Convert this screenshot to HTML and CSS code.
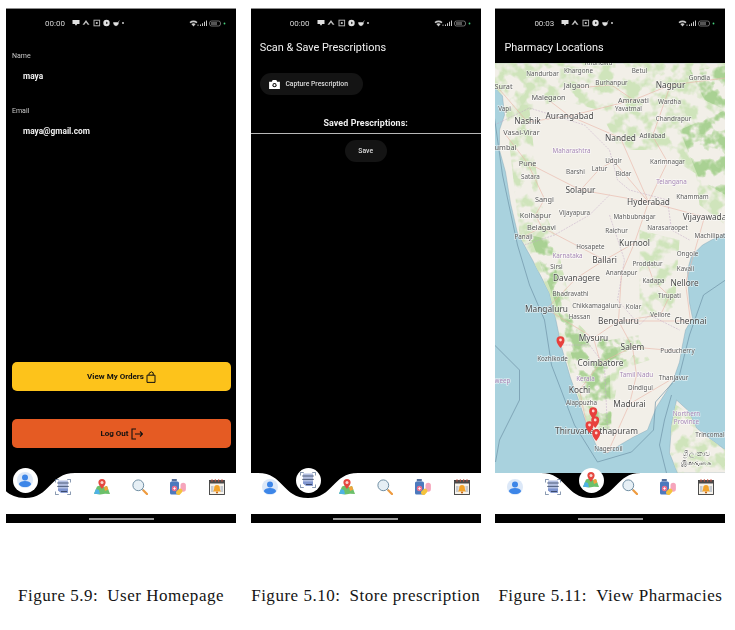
FILE: index.html
```html
<!DOCTYPE html>
<html lang="en">
<head>
<meta charset="utf-8">
<title>Figures 5.9 to 5.11</title>
<link rel="stylesheet" href="styles.css">
</head>
<body>
<svg class="defs" aria-hidden="true">
  <symbol id="i-profile" viewBox="0 0 16 16">
    <circle cx="8" cy="8" r="8" fill="#dce8f8"/>
    <circle cx="8" cy="5.600" r="3" fill="#3d86e8"/>
    <path d="M1.800 12.200C2.400 9.800 5 9 8 9s5.600.8 6.200 3.200C13 14.400 10.600 15 8 15s-5-.6-6.200-2.800z" fill="#3d86e8"/>
  </symbol>
  <symbol id="i-scan" viewBox="0 0 16 16">
    <path d="M.4 3.500V.4h3.400M12.200.4h3.400v3.100M15.600 12.500v3.100h-3.400M3.800 15.600H.4v-3.100" fill="none" stroke="#5d7394" stroke-width=".8"/>
    <path d="M3 1.600h10v12.200H6l-3-2.400z" fill="#b4c0e2"/>
    <path d="M3 9.500h10v4.300H6l-3-2.400z" fill="#7f95cf"/>
    <path d="M2.200 4h11.600M2.200 7.400h11.600" stroke="#42506e" stroke-width=".9"/>
    <path d="M6 12.500h6" stroke="#33415f" stroke-width=".9"/>
  </symbol>
  <symbol id="i-map" viewBox="0 0 16 16">
    <path d="M3 7.500 6 6.600l4 1.400 3-1 3 8-5-.3-4.600.7L0 14.700z" fill="#6cc06a"/>
    <path d="M0 14.700 2 10l3 1 1 4.200z" fill="#4fb2e6"/>
    <path d="M10 8l3-1 1.300 3.500L11 12z" fill="#f1a33c"/>
    <path d="M8 0a3.600 3.600 0 0 1 3.600 3.600C11.600 6 8 10 8 10S4.400 6 4.400 3.600A3.600 3.600 0 0 1 8 0z" fill="#e5473f"/>
    <circle cx="8" cy="3.600" r="1.500" fill="#f8d6d0"/>
  </symbol>
  <symbol id="i-search" viewBox="0 0 16 16">
    <circle cx="6.300" cy="6.300" r="5.400" fill="#e6eff5" stroke="#6f8ea3" stroke-width="1"/>
    <path d="M10.500 10.500l1 1" stroke="#6f8ea3" stroke-width="1.400"/>
    <path d="M11.500 11.500l3.500 3.500" stroke="#ee9a3d" stroke-width="2.200" stroke-linecap="round"/>
  </symbol>
  <symbol id="i-meds" viewBox="0 0 16 16">
    <rect x="1.800" y="0" width="5" height="2.400" fill="#546f9c"/>
    <rect x="0" y="2.400" width="9" height="13" rx="1.500" fill="#4c79bd"/>
    <circle cx="4.500" cy="9.500" r="2.700" fill="#ee6f8c"/>
    <path d="M3.200 9.500h2.600M4.500 8.200v2.600" stroke="#fff" stroke-width=".8"/>
    <rect x="10.500" y="3.800" width="5.400" height="9" rx="2.700" fill="#f6a5bb"/>
    <path d="M7.500 15.800a2.300 2.300 0 0 1-1-3.600l2.400-2.200a2.300 2.300 0 0 1 3.300 3l-2.200 2.400a2.300 2.300 0 0 1-2.500.4z" fill="#f4c33d"/>
  </symbol>
  <symbol id="i-cal" viewBox="0 0 16 16">
    <rect x=".5" y="1.500" width="15" height="14" fill="#f7f3ec" stroke="#3b3b3b" stroke-width=".9"/>
    <rect x=".5" y="1.500" width="15" height="3" fill="#4a4a4a"/>
    <path d="M3 .2v2.500M6.300.2v2.500M9.700.2v2.500M13 .2v2.500" stroke="#c8503f" stroke-width="1"/>
    <path d="M2 13V7h2.500v6zM11.500 13V7H14v6z" fill="#c5cad0"/>
    <path d="M8 6a2.800 2.800 0 0 1 2.800 2.800c0 2 .6 2.800 1.200 3.600H4c.6-.8 1.200-1.600 1.200-3.600A2.800 2.800 0 0 1 8 6z" fill="#f2a32a"/>
    <circle cx="8" cy="13.500" r="1.100" fill="#c96a18"/>
  </symbol>
  <symbol id="i-status-left" viewBox="0 0 52 8">
    <path d="M.5 1h7v4H5.200L4 6.800 2.800 5H.5z" fill="#e0e0e0"/>
    <path d="M14 1l1.200 1.700 2.300 3h-1.800L14 3.500 12.300 5.700h-1.800l2.300-3z" fill="#c0c0c0"/>
    <rect x="22" y="1.200" width="5.600" height="5.600" fill="none" stroke="#b0b0b0"/>
    <circle cx="24.800" cy="4" r="1.100" fill="#ccc"/>
    <circle cx="34.500" cy="4" r="3.200" fill="#e0e0e0"/>
    <path d="M34 2.400l2.200 1.600-2.200 1.300z" fill="#333"/>
    <path d="M41.500 3.500h5c0 2-1.100 3.200-2.500 3.200s-2.500-1.200-2.500-3.200zM46 2.800l1.700-1.100" fill="#e0e0e0" stroke="#e0e0e0" stroke-width=".5"/>
    <circle cx="51" cy="4" r=".9" fill="#e0e0e0"/>
  </symbol>
  <symbol id="i-status-right" viewBox="0 0 38 7">
    <path d="M.5 2a7 7 0 0 1 8 0L7.500 3.300a5 5 0 0 0-6 0zM2.300 4a4 4 0 0 1 4.400 0L4.500 6.500z" fill="#c8c8c8"/>
    <path d="M8.500 4.500h1v1.500h-1z" fill="#aaa"/>
    <path d="M11 4.500h1V6h-1zM13 3.200h1V6h-1zM15 1.800h1V6h-1zM17 .6h1V6h-1z" fill="#c8c8c8"/>
    <rect x="20.500" y="1" width="11" height="5" rx="2" fill="none" stroke="#888" stroke-width=".8"/>
    <rect x="22" y="2" width="6" height="3" fill="#555"/>
    <circle cx="35.500" cy="3.500" r=".9" fill="#45d07c"/>
  </symbol>
</svg>

<main class="page">
  <figure class="figure">
    <section class="phone">
      <header class="status">
        <span class="time">00:00</span>
        <svg class="status-left"><use href="#i-status-left"/></svg>
        <svg class="status-right"><use href="#i-status-right"/></svg>
      </header>
      <div class="screen profile-screen">
        <p class="field-label">Name</p>
        <p class="field-value">maya</p>
        <p class="field-label email-label">Email</p>
        <p class="field-value">maya@gmail.com</p>
        <button class="wide-btn btn-orders">View My Orders
          <svg class="btn-icon" viewBox="0 0 10 12"><path d="M1 4.200h8v7.200H1zM3 4.200V2.400L5.400.8 7.200 1.800v2.400" fill="none" stroke="#111" stroke-width="1"/></svg>
        </button>
        <button class="wide-btn btn-logout">Log Out
          <svg class="btn-icon-logout" viewBox="0 0 12 12"><path d="M5 1H1v10h4M4 6h7.500M9 3.500 11.500 6 9 8.500" fill="none" stroke="#111" stroke-width="1.100"/></svg>
        </button>
      </div>
      <nav class="nav">
        <svg class="notch notch-1" viewBox="0 0 100 25"><path d="M0 0C26 0 24 25 50 25S74 0 100 0z"/></svg>
        <span class="nav-item active"><svg class="nav-icon"><use href="#i-profile"/></svg></span>
        <span class="nav-item"><svg class="nav-icon"><use href="#i-scan"/></svg></span>
        <span class="nav-item"><svg class="nav-icon"><use href="#i-map"/></svg></span>
        <span class="nav-item"><svg class="nav-icon"><use href="#i-search"/></svg></span>
        <span class="nav-item"><svg class="nav-icon"><use href="#i-meds"/></svg></span>
        <span class="nav-item"><svg class="nav-icon"><use href="#i-cal"/></svg></span>
      </nav>
      <div class="homebar"><span class="home-pill"></span></div>
    </section>
    <figcaption class="caption">Figure 5.9:&ensp;User Homepage</figcaption>
  </figure>

  <figure class="figure">
    <section class="phone">
      <header class="status">
        <span class="time">00:00</span>
        <svg class="status-left"><use href="#i-status-left"/></svg>
        <svg class="status-right"><use href="#i-status-right"/></svg>
      </header>
      <div class="screen scan-screen">
        <h1 class="title">Scan &amp; Save Prescriptions</h1>
        <button class="pill capture">
          <svg class="camera" viewBox="0 0 12 10"><path d="M0 2h3l1-2h4l1 2h3v8H0z" fill="#fff"/><circle cx="6" cy="5.700" r="2.300" fill="#141414"/><circle cx="6" cy="5.700" r="1.200" fill="#fff"/></svg>
          Capture Prescription
        </button>
        <h2 class="saved">Saved Prescriptions:</h2>
        <div class="saved-list">
          <button class="pill save">Save</button>
        </div>
      </div>
      <nav class="nav">
        <svg class="notch notch-2" viewBox="0 0 100 25"><path d="M0 0C26 0 24 25 50 25S74 0 100 0z"/></svg>
        <span class="nav-item"><svg class="nav-icon"><use href="#i-profile"/></svg></span>
        <span class="nav-item active"><svg class="nav-icon"><use href="#i-scan"/></svg></span>
        <span class="nav-item"><svg class="nav-icon"><use href="#i-map"/></svg></span>
        <span class="nav-item"><svg class="nav-icon"><use href="#i-search"/></svg></span>
        <span class="nav-item"><svg class="nav-icon"><use href="#i-meds"/></svg></span>
        <span class="nav-item"><svg class="nav-icon"><use href="#i-cal"/></svg></span>
      </nav>
      <div class="homebar"><span class="home-pill"></span></div>
    </section>
    <figcaption class="caption">Figure 5.10:&ensp;Store prescription</figcaption>
  </figure>

  <figure class="figure">
    <section class="phone">
      <header class="status">
        <span class="time">00:03</span>
        <svg class="status-left"><use href="#i-status-left"/></svg>
        <svg class="status-right"><use href="#i-status-right"/></svg>
      </header>
      <div class="screen map-screen">
        <h1 class="title">Pharmacy Locations</h1>
        <svg class="map" viewBox="495.500 63 230 410">
          <defs>
            <filter id="mottle" filterUnits="userSpaceOnUse" x="495" y="63" width="232" height="411">
              <feTurbulence type="fractalNoise" baseFrequency=".075" numOctaves="3" seed="7" result="n"/>
              <feColorMatrix in="n" type="matrix" values="0 0 0 0 0  0 0 0 0 0  0 0 0 0 0  5 0 0 0 -2.150" result="a"/>
              <feComposite in="SourceGraphic" in2="a" operator="in"/>
              <feGaussianBlur stdDeviation=".7"/>
            </filter>
            <clipPath id="landclip">
              <path d="M495 63H726V233L712 240 703 245 692 256 688 270 689 290 690 303 693 318 686 330 683 345 680 362 673 382 664 396 657 407 653 417 648 430 634 437 622 444 608 453 597 446 587 424 579 400 571 378 562 347 556 318 550 293 533 260 518 233 511 203 506 172 500 150 500 130 505 115 503 96 496 88 495 86z"/>
              <path d="M677 400 688 410 697 428 712 440 726 450V473H678L670 453 672 425z"/>
            </clipPath>
            <path id="pin" d="M0 0C-2.300-3-4-5-4-7.800a4 4 0 0 1 8 0C4-5 2.300-3 0 0z" fill="#e8403c"/>
          </defs>
          <rect x="495" y="63" width="232" height="411" fill="#a9d2de"/>
          <path class="land" d="M495 63H726V233L712 240 703 245 692 256 688 270 689 290 690 303 693 318 686 330 683 345 680 362 673 382 664 396 657 407 653 417 648 430 634 437 622 444 608 453 597 446 587 424 579 400 571 378 562 347 556 318 550 293 533 260 518 233 511 203 506 172 500 150 500 130 505 115 503 96 496 88 495 86z"/>
          <path class="land" d="M677 400 688 410 697 428 712 440 726 450V473H678L670 453 672 425z"/>
          <g clip-path="url(#landclip)">
            <g class="forest" filter="url(#mottle)">
              <path d="M495 63H726V190L690 170 660 150 620 150 600 110 560 100 530 110 495 100z"/>
              <path d="M505 100 530 110 540 200 555 235 575 320 600 345 640 340 650 360 620 370 610 430 590 430 570 370 550 300 520 235z"/>
              <path d="M640 230 680 240 675 310 640 320z"/>
              <path d="M670 400 726 440V473H670z"/>
              <path d="M690 125 726 120V225L700 205z"/>
            </g>
            <g class="forest-deep" filter="url(#mottle)">
              <path d="M680 130 726 110V195L700 180z"/>
              <path d="M530 235 552 240 560 290 580 335 610 340 640 335 636 355 610 370 612 425 595 425 575 365 555 300z"/>
              <path d="M690 70 726 66V110L705 100z"/>
            </g>
          </g>
          <g class="roads">
            <path d="M497 86 528 122 570 116 634 100 671 85 726 78"/>
            <path d="M504 132 528 163 545 199 536 215 542 227 524 237"/>
            <path d="M528 163 581 190 649 202 705 217 686 283 691 321"/>
            <path d="M570 116 621 138 649 202 635 243 622 273 619 321 594 338 601 363 580 390 587 424"/>
            <path d="M542 227 605 260 577 278 547 309 594 338"/>
            <path d="M619 321 691 321M619 321 633 347 637 375 630 404 608 453"/>
            <path d="M671 85 653 136 668 162 649 202"/>
            <path d="M601 363 633 347 678 351M630 404 674 378"/>
            <path d="M577 88 612 85 634 100M549 100 570 116M600 169 614 161 649 202M581 190 600 169M635 243 605 260M648 264 654 281 670 296 661 315 619 321"/>
          </g>
          <g class="bounds">
            <path d="M495 125 530 108 585 125 610 150 618 180 630 190 668 200 672 230 690 240"/>
            <path d="M525 245 555 235 590 215 610 195"/>
            <path d="M610 215 625 260 618 300 640 325 650 315 680 330"/>
            <path d="M560 345 590 345 605 365 608 430"/>
          </g>
          <g class="sealine">
            <path d="M495 118 503 175 518 245 530 285 545 320 552 365 575 425 598 462 632 452 654 430 656 402 680 375 690 335 704 295 726 280"/>
            <path d="M495 345 520 370 520 400 500 440 496 462"/>
            <path d="M667 473 660 445 665 420 672 395"/>
          </g>
          <g class="lb">
            <text class="s" x="543" y="76">Nandurbar</text><text class="s" x="579" y="73">Khargone</text><text class="s" x="640" y="73">Betul</text><text class="s" x="700" y="80">Gondia</text><text class="s" x="599" y="65">Khandwa</text>
            <text class="m" x="504" y="89">Surat</text><text class="m" x="577" y="88">Jalgaon</text><text class="s" x="612" y="85">Burhanpur</text><text class="l" x="671" y="88">Nagpur</text>
            <text class="m" x="549" y="100">Malegaon</text><text class="m" x="634" y="103">Amravati</text><text class="s" x="670" y="104">Wardha</text><text class="s" x="505" y="111">Vapi</text><text class="s" x="629" y="111">Yavatmal</text>
            <text class="l" x="528" y="124">Nashik</text><text class="l" x="570" y="119">Aurangabad</text><text class="s" x="674" y="121">Chandrapur</text><text class="m" x="522" y="135">Vasai-Virar</text><text class="l" x="621" y="141">Nanded</text><text class="s" x="653" y="138">Adilabad</text>
            <text class="m" x="506" y="150">umbai</text><text class="st" x="572" y="153">Maharashtra</text><text class="m" x="528" y="166">Pune</text><text class="s" x="614" y="163">Udgir</text><text class="s" x="668" y="164">Karimnagar</text>
            <text class="s" x="576" y="174">Barshi</text><text class="s" x="600" y="171">Latur</text><text class="s" x="624" y="176">Bidar</text><text class="s" x="531" y="179">Satara</text>
            <text class="l" x="581" y="193">Solapur</text><text class="st" x="672" y="184">Telangana</text><text class="m" x="545" y="202">Sangi</text><text class="l" x="649" y="205">Hyderabad</text><text class="s" x="693" y="199">Khammam</text>
            <text class="m" x="536" y="218">Kolhapur</text><text class="s" x="575" y="215">Vijayapura</text><text class="s" x="635" y="219">Mahbubnagar</text><text class="l" x="705" y="220">Vijayawada</text>
            <text class="m" x="542" y="230">Belagavi</text><text class="s" x="617" y="233">Raichur</text><text class="s" x="668" y="230">Narasaraopet</text><text class="s" x="717" y="238">Machilipatnam</text><text class="s" x="524" y="239">Panaji</text>
            <text class="s" x="591" y="249">Hosapete</text><text class="l" x="635" y="246">Kurnool</text><text class="s" x="688" y="256">Ongole</text><text class="st" x="568" y="258">Karnataka</text><text class="l" x="605" y="263">Ballari</text><text class="s" x="648" y="266">Proddatur</text>
            <text class="s" x="557" y="269">Sirsi</text><text class="s" x="686" y="271">Kavali</text><text class="s" x="622" y="275">Anantapur</text><text class="l" x="577" y="281">Davanagere</text><text class="s" x="654" y="283">Kadapa</text><text class="l" x="685" y="286">Nellore</text>
            <text class="s" x="571" y="296">Bhadravathi</text><text class="s" x="670" y="298">Tirupati</text><text class="s" x="597" y="308">Chikkamagaluru</text><text class="s" x="634" y="309">Kolar</text><text class="l" x="547" y="312">Mangaluru</text>
            <text class="s" x="580" y="319">Hassan</text><text class="s" x="661" y="317">Vellore</text><text class="l" x="619" y="324">Bengaluru</text><text class="l" x="691" y="324">Chennai</text><text class="l" x="594" y="341">Mysuru</text><text class="l" x="633" y="350">Salem</text>
            <text class="s" x="678" y="353">Puducherry</text><text class="s" x="553" y="361">Kozhikode</text><text class="l" x="601" y="366">Coimbatore</text><text class="st" x="637" y="377">Tamil Nadu</text><text class="s" x="674" y="380">Thanjavur</text><text class="st" x="503" y="383">weep</text><text class="st" x="586" y="381">Kerala</text>
            <text class="l" x="580" y="393">Kochi</text><text class="s" x="641" y="390">Dindigul</text><text class="s" x="582" y="405">Alappuzha</text><text class="l" x="630" y="407">Madurai</text>
            <text class="st" x="687" y="416">Northern</text><text class="st" x="687" y="424">Province</text><text class="s" x="714" y="437">Trincomalee</text>
            <text class="l" x="597" y="434">Thiruvananthapuram</text><text class="s" x="609" y="451">Nagercoil</text>
            <text class="m" x="697" y="456">ශ්‍රී ලංකාව</text><text class="m" x="696" y="465">இலங்கை</text>
          </g>
          <g>
            <use href="#pin" x="561" y="348"/><circle class="pin-dot" cx="561" cy="340" r="1.400"/>
            <use href="#pin" x="593.700" y="419"/><circle class="pin-dot" cx="593.700" cy="411" r="1.400"/>
            <use href="#pin" x="595.700" y="428"/><circle class="pin-dot" cx="595.700" cy="420" r="1.400"/>
            <use href="#pin" x="590" y="433"/><circle class="pin-dot" cx="590" cy="425" r="1.400"/>
            <use href="#pin" x="596.700" y="441"/><circle class="pin-dot" cx="596.700" cy="433" r="1.400"/>
          </g>
        </svg>
      </div>
      <nav class="nav">
        <svg class="notch notch-3" viewBox="0 0 100 25"><path d="M0 0C26 0 24 25 50 25S74 0 100 0z"/></svg>
        <span class="nav-item"><svg class="nav-icon"><use href="#i-profile"/></svg></span>
        <span class="nav-item"><svg class="nav-icon"><use href="#i-scan"/></svg></span>
        <span class="nav-item active"><svg class="nav-icon"><use href="#i-map"/></svg></span>
        <span class="nav-item"><svg class="nav-icon"><use href="#i-search"/></svg></span>
        <span class="nav-item"><svg class="nav-icon"><use href="#i-meds"/></svg></span>
        <span class="nav-item"><svg class="nav-icon"><use href="#i-cal"/></svg></span>
      </nav>
      <div class="homebar"><span class="home-pill"></span></div>
    </section>
    <figcaption class="caption">Figure 5.11:&ensp;View Pharmacies</figcaption>
  </figure>
</main>
</body>
</html>
```
FILE: styles.css
```css
* { box-sizing: border-box; }
html, body { margin: 0; padding: 0; background: #fff; }
body { width: 735px; height: 630px; overflow: hidden; font-family: Roboto, "Noto Sans", sans-serif; }
.defs { position: absolute; width: 0; height: 0; }

.page { display: flex; gap: 14.700px; padding: 8px 0 0 6px; }
.figure { width: 230px; margin: 0; display: flex; flex-direction: column; align-items: center; }

.phone { width: 230px; height: 515px; background: #000; border-top: 1px solid #8c8c8c; display: flex; flex-direction: column; overflow: hidden; filter: blur(.4px); }

.status { height: 28px; flex: none; display: flex; align-items: center; padding: 0 9px 0 39px; }
.time { font-size: 8px; color: #d4d4d4; letter-spacing: 0; width: 27px; }
.status-left { width: 52px; height: 8px; }
.status-right { width: 38px; height: 7px; margin-left: auto; }

.screen { flex: 1; min-height: 0; display: flex; flex-direction: column; }

.profile-screen { padding: 14px 5px 25px 6px; }
.field-label { margin: 0; font-size: 7px; line-height: 10px; color: #c8c8c8; }
.field-value { margin: 10px 0 0 11px; font-size: 8.300px; line-height: 10px; font-weight: 700; color: #f0f0f0; }
.email-label { margin-top: 25px; }

.wide-btn { height: 29px; border: 0; border-radius: 5px; padding: 0; font: 700 8px Roboto, sans-serif; color: #111; display: flex; align-items: center; justify-content: center; gap: 2px; }
.btn-orders { background: #fdc31b; margin-top: auto; }
.btn-logout { background: #e55b23; margin-top: 28px; }
.btn-icon { width: 10px; height: 12px; }
.btn-icon-logout { width: 12px; height: 12px; }

.title { margin: 0; height: 26px; padding-left: 9px; font-size: 10.900px; line-height: 21px; font-weight: 400; color: #f2f2f2; flex: none; }

.pill { border: 0; background: #141414; color: #dcdcdc; border-radius: 11px; height: 22px; font: 500 6.800px Roboto, sans-serif; display: flex; align-items: center; justify-content: center; }
.capture { width: 103px; margin: 10px 0 0 9px; gap: 5px; padding-left: 1px; }
.camera { width: 11px; height: 9px; }
.saved { margin: 22px 0 0; height: 16px; font-size: 8.900px; line-height: 12px; font-weight: 700; text-align: center; color: #f0f0f0; letter-spacing: .1px; }
.saved-list { border-top: 1px solid #b8b8b8; padding-top: 6px; display: flex; justify-content: center; }
.save { width: 42px; }

.map { width: 230px; height: 410px; display: block; flex: none; }
.land { fill: #f2efe8; stroke: #7d9eb0; stroke-width: .4; }
.forest { fill: #cfe4bb; }
.forest-deep { fill: #a9d193; }
.roads { fill: none; stroke: #eab3a6; stroke-width: .6; }
.bounds { fill: none; stroke: #c3a9c6; stroke-width: .5; stroke-dasharray: 2 1; }
.sealine { fill: none; stroke: #6f93a8; stroke-width: .7; }
.lb text { font-family: "Noto Sans", sans-serif; text-anchor: middle; fill: #5a5a5a; stroke: rgba(255,255,255,.6); stroke-width: 1.300px; paint-order: stroke; }
.lb .s { font-size: 6.300px; }
.lb .m { font-size: 7.300px; }
.lb .l { font-size: 8.300px; fill: #4a4a4a; }
.lb .st { font-size: 6.300px; fill: #a687b5; }
.pin-dot { fill: #fbd7d3; }

.nav { height: 41px; flex: none; background: #fff; position: relative; display: grid; grid-template-columns: repeat(6, 1fr); }
.notch { position: absolute; top: 0; width: 100px; height: 25px; fill: #000; }
.notch-1 { left: -31px; }
.notch-2 { left: 7.500px; }
.notch-3 { left: 46px; }
.nav-item { position: relative; justify-self: center; align-self: start; margin-top: 6px; width: 16px; height: 16px; display: flex; align-items: center; justify-content: center; }
.nav-item.active { width: 25px; height: 25px; margin-top: -5.500px; border-radius: 50%; background: #fff; }
.nav-icon { width: 16px; height: 16px; }

.homebar { height: 9px; flex: none; background: #000; display: flex; align-items: center; justify-content: center; }
.home-pill { width: 65px; height: 2px; background: #9a9a9a; }

.caption { margin-top: 63px; font-family: "Liberation Serif", serif; font-size: 17px; line-height: 20px; color: #141414; white-space: nowrap; letter-spacing: .52px; }
```
